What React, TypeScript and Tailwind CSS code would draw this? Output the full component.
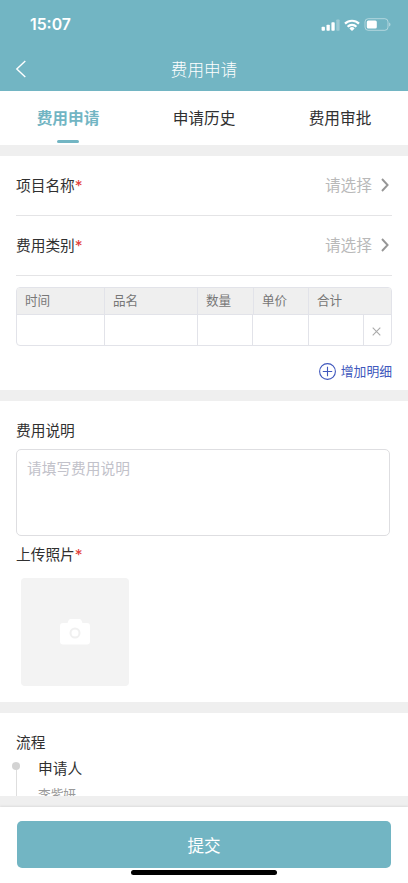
import type { ReactNode } from 'react';

const TABS = ['费用申请', '申请历史', '费用审批'];
const COLUMNS = ['时间', '品名', '数量', '单价', '合计'];

function StatusBar() {
  return (
    <div className="flex h-[47px] items-center justify-between pt-[2px] pr-[17px] pl-[30px] text-white">
      <span className="font-['Inter'] text-[15.8px] leading-5 font-semibold">15:07</span>
      <div className="flex items-center">
        <svg width="19" height="12" viewBox="0 0 19 12" fill="currentColor">
          <rect x="0.6" y="7.7" width="3.3" height="4" rx="0.8" />
          <rect x="5.5" y="5.7" width="3.3" height="6" rx="0.8" />
          <rect x="10.4" y="3.2" width="3.3" height="8.5" rx="0.8" />
          <rect x="15.3" y="0.5" width="3.3" height="11.2" rx="0.8" opacity="0.3" />
        </svg>
        <svg className="ml-1" width="16" height="12" viewBox="0 0 16 12" fill="none" stroke="currentColor" strokeWidth="2.2">
          <path d="M1 4.6a10 10 0 0 1 14 0" />
          <path d="M3.6 7.7a6.2 6.2 0 0 1 8.8 0" />
          <path d="M8 11.9 5.4 9.4a3.7 3.7 0 0 1 5.2 0z" fill="currentColor" stroke="none" />
        </svg>
        <svg className="ml-1" width="27" height="13" viewBox="0 0 27 13">
          <rect x="1" y="0.7" width="23" height="11.6" rx="3.2" fill="none" stroke="white" strokeOpacity="0.45" />
          <rect x="2.8" y="2.4" width="10" height="8.2" rx="1.5" fill="white" />
          <path d="M25.2 4.5c1.7.6 1.7 3.4 0 4z" fill="white" opacity="0.5" />
        </svg>
      </div>
    </div>
  );
}

function Label({ children, required }: { children: ReactNode; required?: boolean }) {
  return (
    <div className="flex h-5 text-[14.7px] leading-5 text-[#303030]">
      {children}
      {required && <span className="font-['Inter'] text-[15.5px] leading-6 text-[#e23c39]">*</span>}
    </div>
  );
}

function SelectRow({ label }: { label: string }) {
  return (
    <div className="flex h-[60px] items-center justify-between border-b border-[#e4e4e6] pb-px">
      <Label required>{label}</Label>
      <div className="flex items-center pr-[3px] text-[15.7px] leading-5 text-[#b9b9b9]">
        请选择
        <svg className="ml-[9px]" width="8" height="14" viewBox="0 0 8 14" fill="none" stroke="#969696" strokeWidth="1.9">
          <path d="M1 1l5.6 6L1 13" />
        </svg>
      </div>
    </div>
  );
}

function DetailTable() {
  return (
    <div className="mt-[11px] h-[59px] overflow-hidden rounded-[4px] border border-[#e2e3e9] text-[12.6px] text-[#777]">
      <div className="grid h-[26px] grid-cols-[88px_93px_56px_55px_1fr] bg-[#efefef]">
        {COLUMNS.map((name) => (
          <div key={name} className="border-r border-[#e2e3e9] pl-2 leading-[23px] last:border-r-0">
            {name}
          </div>
        ))}
      </div>
      <div className="grid h-[32px] grid-cols-[88px_93px_55px_56px_55px_1fr] border-t border-[#e2e3e9]">
        {COLUMNS.map((name) => (
          <div key={name} className="border-r border-[#e2e3e9]" />
        ))}
        <div className="flex items-center justify-center pt-px pr-[3px]">
          <svg width="9" height="9" viewBox="0 0 9 9" stroke="#aaa" strokeWidth="1.1">
            <path d="M.7.7l7.6 7.6M8.3.7L.7 8.3" />
          </svg>
        </div>
      </div>
    </div>
  );
}

export default function App() {
  return (
    <div className="flex h-[883px] w-[408px] flex-col overflow-hidden bg-[#efefef] font-['Noto_Sans_CJK_SC',sans-serif]">
      <header className="h-[91px] shrink-0 bg-[#72b5c3]">
        <StatusBar />
        <div className="grid h-[44px] grid-cols-[1fr_auto_1fr] items-center text-white">
          <svg className="ml-[15px]" width="12" height="18" viewBox="0 0 12 18" fill="none" stroke="currentColor" strokeWidth="1.4">
            <path d="M10.3 1L1.8 9l8.5 8" />
          </svg>
          <h1 className="pb-px text-[16.6px] leading-6 font-light">费用申请</h1>
        </div>
      </header>

      <nav className="grid h-[54px] shrink-0 grid-cols-3 bg-white text-center text-[15.7px] text-[#303030]">
        {TABS.map((tab, i) => (
          <div key={tab} className="flex flex-col items-center pt-[15px]">
            <span className={i === 0 ? 'leading-6 font-bold text-[#72b5c3]' : 'leading-6'}>{tab}</span>
            {i === 0 && <span className="mt-[10px] h-[3px] w-[22px] rounded-full bg-[#72b5c3]" />}
          </div>
        ))}
      </nav>

      <section className="mt-[11px] h-[234px] shrink-0 bg-white px-4">
        <SelectRow label="项目名称" />
        <SelectRow label="费用类别" />
        <DetailTable />
        <div className="mt-[15px] flex items-center justify-end text-[12.8px] leading-5 text-[#4058bd]">
          <svg className="mr-[5px]" width="17" height="17" viewBox="0 0 17 17" fill="none" stroke="currentColor" strokeWidth="1.1">
            <circle cx="8.5" cy="8.5" r="7.9" />
            <path d="M8.5 3.8v9.4M3.8 8.5h9.4" />
          </svg>
          增加明细
        </div>
      </section>

      <section className="mt-[11px] h-[301px] shrink-0 bg-white px-4 pt-[19px]">
        <Label>费用说明</Label>
        <div className="mt-[9px] mr-[2px] h-[87px] rounded-[5px] border border-[#dedee1] px-[10px] pt-2 text-[14.7px] leading-5 text-[#c2c2ca]">
          请填写费用说明
        </div>
        <div className="mt-2">
          <Label required>上传照片</Label>
        </div>
        <div className="mt-[14px] ml-[5px] flex h-[108px] w-[108px] items-center justify-center rounded-[4px] bg-[#f3f3f3]">
          <svg width="30" height="26" viewBox="0 0 30 26">
            <path
              d="M3 4h4.5l1-2.5Q9 0 10.5 0h9Q21 0 21.5 1.5L22.5 4H27q3 0 3 3v15.500q0 3-3 3H3q-3 0-3-3V7q0-3 3-3z"
              fill="white"
            />
            <circle cx="15" cy="14" r="4.5" fill="none" stroke="#f0f0f0" strokeWidth="2" />
          </svg>
        </div>
      </section>

      <section className="mt-[11px] h-[83px] shrink-0 overflow-hidden bg-white px-4 pt-[19px]">
        <Label>流程</Label>
        <div className="flex">
          <div className="-ml-1 flex w-2 flex-col items-center pt-[10px]">
            <span className="h-2 w-2 shrink-0 rounded-full bg-[#d3d3d3]" />
            <span className="h-10 w-px bg-[#dedede]" />
          </div>
          <div className="pt-[6px] pl-[18px]">
            <div className="text-[14.7px] leading-5 text-[#303030]">申请人</div>
            <div className="mt-[6px] text-[12.7px] leading-5 text-[#999]">李紫妍</div>
          </div>
        </div>
      </section>

      <footer className="mt-[11px] flex h-[76px] shrink-0 flex-col items-center bg-white pt-[14px] shadow-[0_-1px_2px_rgba(0,0,0,0.08)]">
        <button className="h-[47px] w-[374px] rounded-[5px] bg-[#72b5c3] text-[16.6px] leading-6 text-white">提交</button>
        <div className="mt-[2px] h-[5px] w-[146px] rounded-full bg-black" />
      </footer>
    </div>
  );
}
